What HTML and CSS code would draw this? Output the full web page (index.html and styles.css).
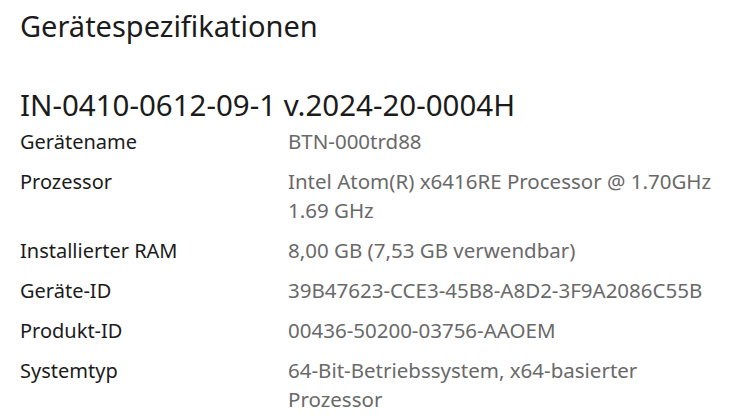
FILE: index.html
```html
<!DOCTYPE html>
<html lang="de">
<head>
<meta charset="utf-8">
<link rel="stylesheet" href="styles.css">
</head>
<body>
<main class="page">
  <h1 class="title">Gerätespezifikationen</h1>
  <h2 class="device">IN-0410-0612-09-1 v.2024-20-0004H</h2>
  <dl class="specs">
    <dt>Gerätename</dt><dd>BTN-000trd88</dd>
    <dt>Prozessor</dt><dd>Intel Atom(R) x6416RE Processor @ 1.70GHz<br>1.69 GHz</dd>
    <dt>Installierter RAM</dt><dd>8,00 GB (7,53 GB verwendbar)</dd>
    <dt>Geräte-ID</dt><dd>39B47623-CCE3-45B8-A8D2-3F9A2086C55B</dd>
    <dt>Produkt-ID</dt><dd>00436-50200-03756-AAOEM</dd>
    <dt>Systemtyp</dt><dd>64-Bit-Betriebssystem, x64-basierter<br>Prozessor</dd>
  </dl>
</main>
</body>
</html>
```
FILE: styles.css
```css
html, body { margin: 0; padding: 0; background: #fff; }
body { font-family: "Noto Sans", "Open Sans", sans-serif; color: #1b1b1b; }
.page { padding: 8px 20px 0 20px; }
.title { margin: 0; font-size: 29px; font-weight: 400; line-height: 36px; }
.device { margin: 41px 0 2px 0; font-size: 29.5px; font-weight: 400; line-height: 40px; }
.specs { margin: 0; display: grid; grid-template-columns: 268px 1fr; row-gap: 11px; font-size: 20px; line-height: 29px; }
.specs dt { margin: 0; color: #1b1b1b; }
.specs dd { margin: 0; color: #696969; font-size: 20.5px; }
```
